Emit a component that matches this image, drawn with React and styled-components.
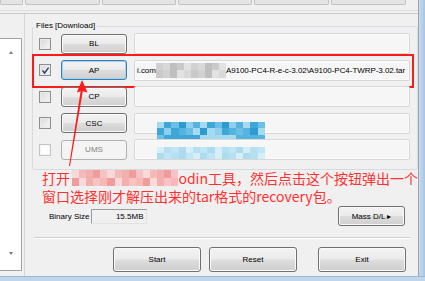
import React from "react";
import styled, { createGlobalStyle } from "styled-components";

const GlobalStyle = createGlobalStyle`
  html, body {
    margin: 0;
    padding: 0;
    background: #f0f0f0;
    overflow: hidden;
  }
  body {
    font-family: "Liberation Sans", Arial, sans-serif;
    font-size: 8px;
    color: #000;
  }
`;

const Window = styled.div`
  position: relative;
  width: 425px;
  height: 281px;
  display: flex;
  flex-direction: column;
  background: #f0f0f0;
  overflow: hidden;
`;

const Frame = styled.div`
  display: flex;
  flex: 1;
  min-height: 0;
`;

const Body = styled.div`
  flex: 1;
  display: flex;
  flex-direction: column;
  border-right: 1px solid #9aa4ad;
`;

const RightEdge = styled.div`
  width: 6px;
  background: linear-gradient(to right, #c9dcf0, #a9c3e0);
`;

const BottomEdge = styled.div`
  height: 4px;
  border-top: 1px solid #9fb6cf;
  background: #bfd5ec;
`;

// top strip of tab-like cells
const TopBar = styled.div`
  height: 10px;
  display: flex;
  gap: 2px;
  border-bottom: 1px solid #dcdcdc;
`;

const TabCell = styled.div`
  width: ${(p) => p.$w}px;
  height: 5px;
  box-sizing: border-box;
  background: #e4e4e4;
  border: 1px solid #c2c2c2;
  border-top: none;
  border-radius: 0 0 2px 2px;
`;

const Main = styled.div`
  flex: 1;
  display: flex;
  margin-top: 2px;
  border-top: 1px solid #cacaca;
`;

const SideList = styled.div`
  width: 22px;
  margin: 24px 0 5px;
  background: #fff;
  border: 1px solid #a3a3a3;
  border-left: none;
  display: flex;
  flex-direction: column;
  align-items: center;
  justify-content: space-between;
  padding: 12px 0 15px;
  box-sizing: border-box;
`;

const ScrollArrow = styled.div`
  width: 0;
  height: 0;
  border-left: 2.5px solid transparent;
  border-right: 2.5px solid transparent;
  ${(p) =>
    p.$up ? "border-bottom: 3px solid #7a7a7a;" : "border-top: 3px solid #7a7a7a;"}
`;

const Panel = styled.div`
  flex: 1;
  display: flex;
  flex-direction: column;
  margin-left: 2px;
  padding-left: 7px;
  border-left: 1px solid #d6d6d6;
`;

const GroupBox = styled.fieldset`
  margin: 7px 0 0 0;
  padding: 2px 7px 9px 6px;
  border: 1px solid #d5dbe0;
  border-radius: 3px;
  min-width: 0;
`;

const Legend = styled.legend`
  margin-left: -5px;
  padding: 0 2px;
  font-size: 8px;
  line-height: 10px;
`;

const Rows = styled.div`
  display: flex;
  flex-direction: column;
  gap: 5.5px;
`;

const Row = styled.div`
  position: relative;
  display: flex;
  align-items: center;
  height: 21px;

  ${(p) =>
    p.$highlight &&
    `
    &::after {
      content: "";
      position: absolute;
      left: -7px;
      right: -4px;
      top: -6px;
      bottom: -7px;
      border: 2px solid #ff1a1a;
      pointer-events: none;
    }
  `}
`;

const CheckBox = styled.div`
  width: 12px;
  height: 12px;
  box-sizing: border-box;
  margin-right: 10px;
  border: 1px solid ${(p) => (p.$disabled ? "#c4c4c4" : "#8e8f8f")};
  background: ${(p) =>
    p.$disabled ? "#fdfdfd" : "linear-gradient(135deg, #d8d8d8, #f7f7f7)"};
  box-shadow: inset 0 0 0 1px ${(p) => (p.$disabled ? "#f4f4f4" : "#eaeaea")};
  display: flex;
  align-items: center;
  justify-content: center;
`;

const Btn = styled.button`
  box-sizing: border-box;
  width: ${(p) => p.$w || 66}px;
  height: ${(p) => p.$h || 20}px;
  padding: 0;
  margin-left: ${(p) => p.$ml || 0}px;
  font-family: "Liberation Sans", Arial, sans-serif;
  font-size: 8px;
  color: #000;
  border: 1px solid #707070;
  border-radius: 3px;
  background: linear-gradient(#f3f3f3 0%, #ebebeb 48%, #dddddd 52%, #cfcfcf 100%);
  box-shadow: inset 0 0 0 1px #fafafa;
  flex-shrink: 0;

  ${(p) =>
    p.$focused &&
    `
    border-color: #3c7fb1;
    box-shadow: inset 0 0 0 1px #9fd3f3;
  `}

  &:disabled {
    border-color: #adb2b5;
    background: #f4f4f4;
    box-shadow: none;
    color: #838383;
  }
`;

const RowButton = styled(Btn)`
  margin-right: 7px;
`;

const Field = styled.div`
  flex: 1;
  height: 21px;
  box-sizing: border-box;
  display: flex;
  align-items: center;
  padding-left: 2px;
  border: 1px solid #d7d7d7;
  border-radius: 2px;
  background: #f6f6f6;
  box-shadow: inset 0 0 0 1px #fbfbfb;
  white-space: nowrap;
  overflow: visible;
  font-size: 8px;
  letter-spacing: -0.05px;
`;

const MosaicGrid = styled.div`
  display: inline-grid;
  vertical-align: middle;
  grid-template-columns: repeat(${(p) => p.$cols}, ${(p) => p.$cw}px);
  grid-auto-rows: ${(p) => p.$ch}px;
  flex-shrink: 0;
  align-self: ${(p) => p.$self || "auto"};
  margin-top: ${(p) => p.$mt || 0}px;
  margin-left: ${(p) => p.$ml || 0}px;
`;

const MosaicCell = styled.div`
  background: ${(p) => p.$c};
`;

const Mosaic = ({ cols, rows, cw, ch, palette, seed = 1, ...rest }) => {
  const cells = [];
  for (let r = 0; r < rows; r++) {
    for (let c = 0; c < cols; c++) {
      const h = (c * 37 + r * 91 + seed * 13 + ((c * r * 7) % 5)) % palette.length;
      cells.push(<MosaicCell key={`${r}-${c}`} $c={palette[h]} />);
    }
  }
  return (
    <MosaicGrid $cols={cols} $cw={cw} $ch={ch} {...rest}>
      {cells}
    </MosaicGrid>
  );
};

const grayPal = ["#c9c9c9", "#d9d9d9", "#e2e2e2", "#bfbfbf", "#d1d1d1"];
const cyanPal = ["#3da8d8", "#69bfe4", "#2c9bcf", "#8dcfec", "#54b3df", "#a5daf0"];
const lightCyanPal = ["#c0e5f4", "#acdbf0", "#d6eef8", "#b6e0f2"];
const pinkPal = ["#f7c3c3", "#f3aeae", "#fad9d9", "#f19c9c", "#f5b9b9"];

const BinaryRow = styled.div`
  display: flex;
  align-items: center;
  height: 20px;
  margin-top: 36px;
  padding: 0 13px 0 17px;
`;

const BinaryLabel = styled.span`
  margin-right: 2px;
`;

const SizeField = styled.div`
  width: 56px;
  height: 15px;
  box-sizing: border-box;
  border: 1px solid;
  border-color: #9c9c9c #e3e3e3 #e3e3e3 #9c9c9c;
  background: #f0f0f0;
  text-align: right;
  padding-right: 3px;
  line-height: 13px;
`;

const Spacer = styled.div`
  flex: 1;
`;

const Separator = styled.div`
  margin: 11px 7px 0 2px;
  border-top: 1px solid #d0d0d0;
  border-bottom: 1px solid #fff;
`;

const ActionRow = styled.div`
  display: flex;
  justify-content: flex-end;
  margin-top: 8px;
  padding-right: 12px;
`;

// red callout text written over the window
const Annotation = styled.div`
  position: absolute;
  left: 42px;
  top: 169px;
  display: flex;
  flex-direction: column;
  font-family: "Noto Sans CJK SC", "Liberation Sans", sans-serif;
  font-size: 14px;
  color: #ff3030;
  white-space: nowrap;
`;

const AnnotationLine = styled.div`
  display: flex;
  align-items: center;
  height: 18px;
  line-height: 18px;
`;

const ArrowLayer = styled.svg`
  position: absolute;
  left: 0;
  top: 0;
  pointer-events: none;
`;

const files = [
  { name: "BL", checked: false },
  { name: "AP", checked: true, focused: true },
  { name: "CP", checked: false },
  { name: "CSC", checked: false },
  { name: "UMS", checked: false, disabled: true },
];

const tabWidths = [23, 75, 74, 74, 75, 75];

function FileField({ name }) {
  if (name === "AP") {
    return (
      <Field>
        i.com
        <Mosaic cols={10} rows={2} cw={7} ch={7.5} palette={grayPal} seed={3} />
        A9100-PC4-R-e-c-3.02\A9100-PC4-TWRP-3.02.tar
      </Field>
    );
  }
  if (name === "CSC") {
    return (
      <Field>
        <Mosaic
          cols={15}
          rows={3}
          cw={7.2}
          ch={6.7}
          palette={cyanPal}
          seed={5}
          $self="flex-start"
          $mt={8}
          $ml={20}
        />
      </Field>
    );
  }
  if (name === "UMS") {
    return (
      <Field>
        <Mosaic
          cols={15}
          rows={2}
          cw={7.2}
          ch={6}
          palette={lightCyanPal}
          seed={2}
          $self="flex-start"
          $mt={7}
          $ml={20}
        />
      </Field>
    );
  }
  return <Field />;
}

function App() {
  return (
    <Window>
      <GlobalStyle />
      <Frame>
        <Body>
          <TopBar>
            {tabWidths.map((w, i) => (
              <TabCell key={i} $w={w} />
            ))}
          </TopBar>
          <Main>
            <SideList>
              <ScrollArrow $up />
              <ScrollArrow />
            </SideList>
            <Panel>
              <GroupBox>
                <Legend>Files [Download]</Legend>
                <Rows>
                  {files.map((f) => (
                    <Row key={f.name} $highlight={f.focused}>
                      <CheckBox $disabled={f.disabled}>
                        {f.checked && (
                          <svg width="9" height="9" viewBox="0 0 9 9">
                            <path
                              d="M1.5 4.5 L3.6 7 L7.6 1.6"
                              fill="none"
                              stroke="#2b3f7a"
                              strokeWidth="1.4"
                            />
                          </svg>
                        )}
                      </CheckBox>
                      <RowButton $focused={f.focused} disabled={f.disabled}>
                        {f.name}
                      </RowButton>
                      <FileField name={f.name} />
                    </Row>
                  ))}
                </Rows>
              </GroupBox>

              <BinaryRow>
                <BinaryLabel>Binary Size</BinaryLabel>
                <SizeField>15.5MB</SizeField>
                <Spacer />
                <Btn $w={67}>Mass D/L ▸</Btn>
              </BinaryRow>

              <Separator />

              <ActionRow>
                <Btn $w={88} $h={25}>Start</Btn>
                <Btn $w={88} $h={25} $ml={8}>Reset</Btn>
                <Btn $w={88} $h={25} $ml={21}>Exit</Btn>
              </ActionRow>
            </Panel>
          </Main>
        </Body>
        <RightEdge />
      </Frame>
      <BottomEdge />

      <ArrowLayer width="425" height="281" viewBox="0 0 425 281">
        <polygon
          points="82,80 87.5,92.5 82.8,91.2 70,166 69,166 80.6,91.2 76.8,92.5"
          fill="#ff1a1a"
        />
      </ArrowLayer>

      <Annotation>
        <AnnotationLine>
          打开
          <Mosaic
            cols={15}
            rows={2}
            cw={7.1}
            ch={8}
            palette={pinkPal}
            seed={4}
            $ml={2}
          />
          odin工具，然后点击这个按钮弹出一个
        </AnnotationLine>
        <AnnotationLine>窗口选择刚才解压出来的tar格式的recovery包。</AnnotationLine>
      </Annotation>
    </Window>
  );
}

export default App;
